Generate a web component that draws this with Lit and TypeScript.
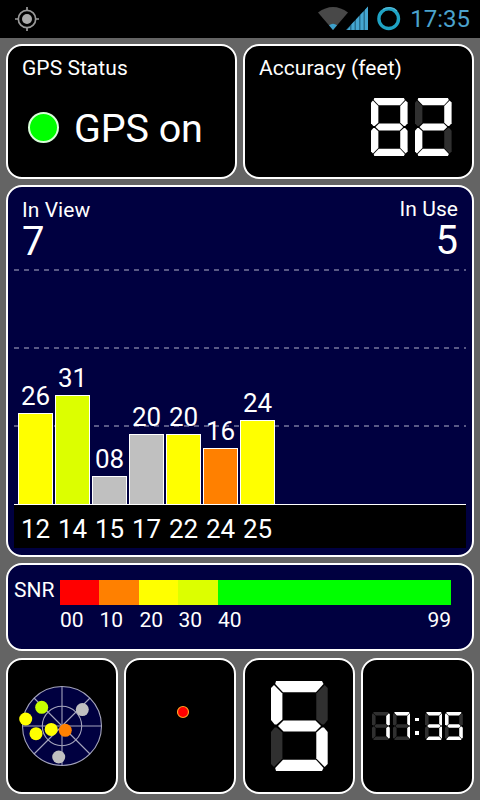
import { LitElement, html, svg, css } from "lit";
import { customElement, property } from "lit/decorators.js";

/* Segment order: top, upper right, lower right, bottom, lower left, upper left, middle */
const SEGMENTS = [
  "5,0 51,0 52.5,3 45,11.3 12,11.3 4.2,3",
  "53.7,4 56.7,7 56.7,39 53,43.5 51,43.5 45.3,38.5 45.3,12.5",
  "51,46.5 53,46.5 56.7,51 56.7,83 53.7,86 45.3,77.5 45.3,51.5",
  "12,78.7 45,78.7 52.5,87 51,90 5,90 4.2,87",
  "3.7,46.5 5.7,46.5 11.4,51.5 11.4,77.5 3,86 0,83 0,51",
  "3,4 11.4,12.5 11.4,38.5 5.7,43.5 3.7,43.5 0,39 0,7",
  "12.5,39.5 44.5,39.5 50,45 44.5,50.5 12.5,50.5 7,45",
];

const LIT: Record<string, string> = {
  "0": "1111110",
  "1": "0110000",
  "2": "1101101",
  "3": "1111001",
  "4": "0110011",
  "5": "1011011",
  "6": "1011111",
  "7": "1110000",
  "8": "1111111",
  "9": "1111011",
};

@customElement("seven-segment")
export class SevenSegment extends LitElement {
  @property() digit = "8";

  static styles = css`
    :host { display: block; }
    .face { display: block; width: 100%; height: 100%; }
    .on { fill: #fff; }
    .off { fill: #303030; }
  `;

  render() {
    const lit = LIT[this.digit];
    return html`<svg class="face" viewBox="0 0 56.7 90" preserveAspectRatio="none">
      ${SEGMENTS.map((p, i) => svg`<polygon class=${lit[i] === "1" ? "on" : "off"} points=${p}></polygon>`)}
    </svg>`;
  }
}

const YELLOW = "#ffff00";
const LIME = "#dcff00";
const GREY = "#c0c0c0";
const ORANGE = "#ff8000";

const SATELLITES = [
  { id: "12", snr: "26", color: YELLOW },
  { id: "14", snr: "31", color: LIME },
  { id: "15", snr: "08", color: GREY },
  { id: "17", snr: "20", color: GREY },
  { id: "22", snr: "20", color: YELLOW },
  { id: "24", snr: "16", color: ORANGE },
  { id: "25", snr: "24", color: YELLOW },
];

const SKY = [
  { x: 41.7, y: 22.3, color: "#c8ff00" },
  { x: 25.7, y: 34, color: YELLOW },
  { x: 36, y: 48.7, color: YELLOW },
  { x: 51.2, y: 44.4, color: YELLOW },
  { x: 65.3, y: 45.3, color: ORANGE },
  { x: 82.3, y: 24.6, color: GREY },
  { x: 58.7, y: 72, color: GREY },
];

@customElement("app-root")
export class AppRoot extends LitElement {
  static styles = css`
    :host {
      display: flex;
      flex-direction: column;
      width: 480px;
      height: 800px;
      overflow: hidden;
      background: #646464;
      color: #fff;
      font-family: Roboto, "Noto Sans", sans-serif;
    }
    * { box-sizing: border-box; }
    .status {
      display: flex;
      justify-content: space-between;
      height: 38px;
      flex: none;
      background: #000;
    }
    .status svg { display: block; }
    .tray { display: flex; }
    .time {
      width: 70px;
      padding-right: 10px;
      text-align: right;
      font-size: 24px;
      line-height: 39px;
      color: #4ba3cd;
      white-space: nowrap;
    }
    .board {
      display: grid;
      grid-template-rows: 135px 372px 88px 137px;
      row-gap: 6px;
      padding: 6px;
    }
    .row { display: grid; }
    .top { grid-template-columns: 231px 231px; column-gap: 6px; }
    .bottom { grid-template-columns: 112px 112px 112px 113px; column-gap: 6.33px; margin-top: 1px; }
    .card {
      border: 2px solid #fff;
      border-radius: 16px;
      background: #000;
      overflow: hidden;
    }
    .navy { background: #000040; }
    .info { padding: 10px 14px 0; }
    .label { font-size: 21px; line-height: 24px; white-space: nowrap; letter-spacing: 0.05px; }
    .gps { display: flex; align-items: center; height: 46px; margin: 26px 0 0 6px; gap: 15px; }
    .led { width: 31px; height: 31px; flex: none; margin-top: -3px; border: 2px solid #d8ffd8; border-radius: 50%; background: #00ff00; }
    .state { font-size: 39.5px; line-height: 46px; white-space: nowrap; letter-spacing: -0.1px; }
    .accuracy { display: flex; justify-content: flex-end; gap: 7px; margin: 18px 6.5px 0 0; }
    .accuracy seven-segment { width: 36.6px; height: 58px; }
    .chart { display: flex; flex-direction: column; padding: 0 6px; }
    .counts { display: flex; justify-content: space-between; height: 82px; padding: 11px 8px 0; }
    .number { font-size: 40px; line-height: 39px; }
    .use { text-align: right; margin-top: -1px; }
    .use .number { line-height: 40px; }
    .plot { display: grid; height: 236px; border-bottom: 1px solid #fff; flex: none; }
    .lines, .bars { grid-area: 1 / 1; }
    .lines { display: block; }
    .bars { display: flex; align-items: flex-end; gap: 2px; padding-left: 4px; }
    .column { width: 35px; text-align: center; }
    .value { display: block; font-size: 26px; line-height: 26px; margin: 0 -4px 4px; letter-spacing: -0.1px; }
    .bar { border: 1px solid #fff; border-bottom: 0; }
    .axis { display: flex; gap: 2px; height: 43px; padding-left: 4px; background: #000; }
    .prn { width: 35px; text-align: center; font-size: 26px; line-height: 48px; letter-spacing: -0.1px; }
    .legend { display: grid; grid-template-columns: 45.5px 391.5px; padding: 15px 6px 0; align-content: start; }
    .snr { font-size: 21px; line-height: 20px; }
    .scale { display: grid; grid-template-columns: 39.5px 40px 39px 39.5px 1fr; height: 24.5px; }
    .red { background: #ff0000; }
    .orange { background: #ff8000; }
    .yellow { background: #ffff00; }
    .lime { background: #dcff00; }
    .green { background: #00ff00; }
    .ticks { grid-column: 2; display: grid; grid-template-columns: 39.5px 40px 39px 39.5px 1fr auto; font-size: 21px; line-height: 24px; padding: 3.5px 0 0 0.5px; }
    .ticks span { white-space: nowrap; }
    .small svg { display: block; }
    .center { display: flex; align-items: center; justify-content: center; }
    .fixes { padding-left: 1px; }
    .fixes seven-segment { width: 56.7px; height: 90px; }
    .clock { gap: 3px; }
    .clock seven-segment { width: 17.8px; height: 28px; flex: none; }
    .colon { display: flex; flex-direction: column; justify-content: space-between; width: 8.3px; height: 17px; flex: none; padding-left: 2px; }
    .colon i { width: 3.5px; height: 3.5px; background: #fff; }
  `;

  private renderStatus() {
    return html`<header class="status">
      <svg width="50" height="38" viewBox="0 0 50 38" fill="none" stroke="#999" stroke-width="1.7">
        <circle cx="27" cy="19" r="8.7"></circle>
        <circle cx="27" cy="19" r="5" fill="#aaa" stroke="none"></circle>
        <path d="M27 7v4M27 27v4M15 19h4M35 19h4"></path>
      </svg>
      <div class="tray">
        <svg width="100" height="38" viewBox="310 0 100 38">
          <path d="M318 12.5Q333 1.500 348 12.500L333 30Z" fill="#484848"></path>
          <path d="M329 25.300Q333 22.300 337 25.300L333 30Z" fill="#3da0cb"></path>
          <path d="M346 30L368 6.500V30Z" fill="#276f8f"></path>
          <path d="M347 30l3-3.200V30ZM351.500 30V24.200l3-3.200V30ZM356 30V19.500l3-3.200V30ZM360.500 30V14.600l3-3.200V30ZM365 30V9.700l3-3.200V30Z" fill="#45a6d0"></path>
          <circle cx="388.700" cy="18.700" r="9.800" fill="none" stroke="#1fa3c4" stroke-width="3.400"></circle>
          <path d="M383 9.500A11 11 0 0 1 397 11" fill="none" stroke="#52b8d6" stroke-width="1.200"></path>
        </svg>
        <span class="time">17:35</span>
      </div>
    </header>`;
  }

  private renderChart() {
    return html`<section class="card navy chart">
      <div class="counts">
        <div><div class="label">In View</div><div class="number">7</div></div>
        <div class="use"><div class="label">In Use</div><div class="number">5</div></div>
      </div>
      <div class="plot">
        <svg class="lines" width="452" height="235" viewBox="0 0 452 235">
          <path d="M0 1H452M0 79H452M0 157H452" stroke="#77779c" stroke-width="1.600" stroke-dasharray="5 5"></path>
        </svg>
        <div class="bars">
          ${SATELLITES.map(
            (s) => html`<div class="column">
              <span class="value">${s.snr}</span>
              <div class="bar" style="height:${Math.ceil(Number(s.snr) * 3.5)}px;background:${s.color}"></div>
            </div>`
          )}
        </div>
      </div>
      <div class="axis">${SATELLITES.map((s) => html`<span class="prn">${s.id}</span>`)}</div>
    </section>`;
  }

  private renderLegend() {
    return html`<section class="card navy legend">
      <span class="snr">SNR</span>
      <div class="scale">
        <i class="red"></i><i class="orange"></i><i class="yellow"></i><i class="lime"></i><i class="green"></i>
      </div>
      <div class="ticks">
        <span>00</span><span>10</span><span>20</span><span>30</span><span>40</span><span>99</span>
      </div>
    </section>`;
  }

  private renderSky() {
    return html`<section class="card small">
      <svg width="108" height="132" viewBox="8 -25 108 132">
        <circle cx="62" cy="41" r="39.500" fill="#000040"></circle>
        <g fill="none" stroke="#a4a4bc" stroke-width="1.100">
          <circle cx="62" cy="41" r="39.500"></circle>
          <circle cx="62" cy="41" r="19.700"></circle>
          <path d="M62 1.500V80.500M22.500 41H101.500"></path>
          <path d="M34 13L90 69M90 13L34 69"></path>
        </g>
        ${SKY.map((s) => svg`<circle cx=${s.x} cy=${s.y} r="6.500" fill=${s.color}></circle>`)}
      </svg>
    </section>`;
  }

  render() {
    return html`
      ${this.renderStatus()}
      <main class="board">
        <div class="row top">
          <section class="card info">
            <div class="label">GPS Status</div>
            <div class="gps"><span class="led"></span><span class="state">GPS on</span></div>
          </section>
          <section class="card info">
            <div class="label">Accuracy (feet)</div>
            <div class="accuracy">
              <seven-segment digit="8"></seven-segment><seven-segment digit="2"></seven-segment>
            </div>
          </section>
        </div>
        ${this.renderChart()}
        ${this.renderLegend()}
        <div class="row bottom">
          ${this.renderSky()}
          <section class="card small">
            <svg width="108" height="132" viewBox="126 660 108 132">
              <circle cx="183" cy="712" r="5.500" fill="#ff0000" stroke="#ffa020" stroke-width="1.200"></circle>
            </svg>
          </section>
          <section class="card center fixes"><seven-segment digit="5"></seven-segment></section>
          <section class="card center clock">
            <seven-segment digit="1"></seven-segment><seven-segment digit="7"></seven-segment>
            <span class="colon"><i></i><i></i></span>
            <seven-segment digit="3"></seven-segment><seven-segment digit="5"></seven-segment>
          </section>
        </div>
      </main>
    `;
  }
}
